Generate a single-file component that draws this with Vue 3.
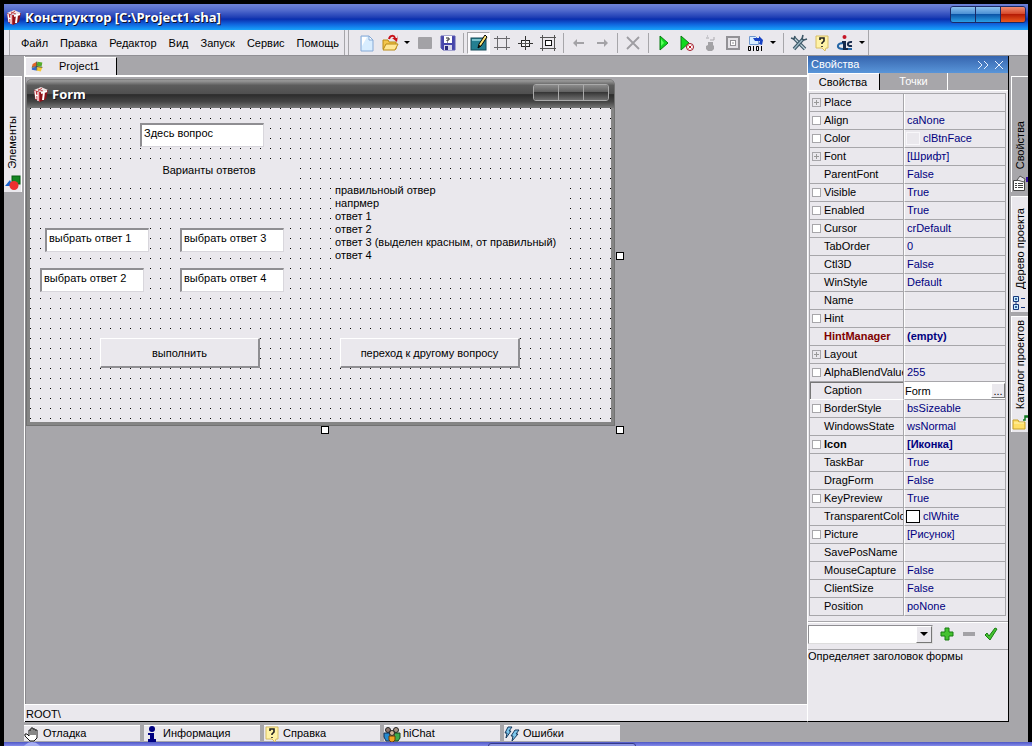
<script setup>
import { ref } from 'vue'

const menu = ['Файл', 'Правка', 'Редактор', 'Вид', 'Запуск', 'Сервис', 'Помощь']

const icons = {
  logo: '<path d="M1 4l6 2v10l-5-3z" fill="#c03038"/><path d="M7 6l8-2-2 9-6 3z" fill="#8f1219"/><path d="M1 4 8 1l7 3-8 2z" fill="#f1e4e4"/><path d="M5 3l5 2M9 2l-4 3" stroke="#c0484c" fill="none"/><path d="M2 5l1 8M5 6v9M3 9l2 1" stroke="#fff" stroke-width="1.300" fill="none"/><path d="M8 7l6-2M11 6l-1 8" stroke="#fff" stroke-width="2" fill="none"/>',
  file: '<path d="M2 1h8l4 4v11H2z" fill="#d8edff" stroke="#86a9d6"/><path d="M3 2h5L3 11z" fill="#fff"/><path d="M10 1v4h4z" fill="#fff" stroke="#86a9d6"/>',
  open: '<path d="M1 14V5h5l1 2h7v7z" fill="#f3c64d" stroke="#b98a15"/><path d="M1 15l3-6h12l-3 6z" fill="#ffe795" stroke="#b98a15"/><path d="M7 4c1-4 5-4 6-1" fill="none" stroke="#c81019" stroke-width="2"/><path d="M10 3h6v-3l-1 7z" fill="#c81019"/>',
  stop: '<rect x="1" y="2" width="14" height="12" rx="1" fill="#a3a2a6"/>',
  save: '<path d="M1 1h14v14H3l-2-2z" fill="#4645ab" stroke="#5a5ab0"/><rect x="4" y="1" width="8" height="7" fill="#fff"/><path d="M6 3h3v2H7v1M7 7h1" stroke="#222" fill="none"/><rect x="4" y="10" width="8" height="5" fill="#d7d7e9"/><rect x="5" y="11" width="3" height="4" fill="#29297d"/>',
  design: '<rect x="0" y="3" width="15" height="12" fill="#247f91" stroke="#154b59"/><path d="M1 5h13" stroke="#76bfca" stroke-width="2"/><path d="M7 13l1-4 6-9 2 2-6 9z" fill="#ffe777" stroke="#000"/><path d="M7 13l1-3 2 1z" fill="#000"/>',
  grid: '<path d="M3.500 1v14M12.500 1v14M0 3.500h16M0 12.500h16" stroke="#6a696d" fill="none"/>',
  target: '<path d="M8.500 1v14M1 8.500h15" stroke="#333" fill="none"/><rect x="4.500" y="5.500" width="8" height="6" fill="#f6f5f8" stroke="#222"/><path d="M8.500 5v7M4 8.500h9" stroke="#555" fill="none"/>',
  frame: '<path d="M2.500 0v16M14.500 0v16M0 2.500h16M0 13.500h16" stroke="#555" fill="none"/><rect x="5.500" y="5.500" width="6" height="5" fill="#fff" stroke="#111"/>',
  left: '<path d="M2 8l4-4v3h7v2H6v3z" fill="#a3a2a6"/>',
  right: '<path d="M14 8l-4-4v3H3v2h7v3z" fill="#a3a2a6"/>',
  cross: '<path d="M2 2l12 12M14 2L2 14" stroke="#9e9da2" stroke-width="1.800" fill="none"/>',
  play: '<path d="M4 1l8 7-8 7z" fill="#10d920" stroke="#087b10"/><path d="M5 4v7l3-3z" fill="#5cff5e"/>',
  playstop: '<path d="M2 1l8 7-8 7z" fill="#10d920" stroke="#087b10"/><circle cx="11" cy="12" r="3.500" fill="#fff" stroke="#9d1020"/><path d="M9.500 10.500l3 3m0-3l-3 3" stroke="#c01020"/>',
  bomb: '<path d="M6 7h5v3l1 1v3l-2 2H6l-2-2v-3l2-1z" fill="#a3a2a6"/><path d="M4 3h3M8 5h4V2M5 1h1" stroke="#aaa9ae" fill="none"/>',
  camera: '<rect x="2" y="2" width="12" height="12" fill="#e4e2e7" stroke="#929196" stroke-width="2"/><rect x="5.500" y="5.500" width="5" height="5" fill="#fff" stroke="#929196"/><path d="M8 7v2" stroke="#929196"/>',
  binary: '<path d="M1.500 1.500h6l3 3v5h-9z" fill="#d8edff" stroke="#6f98d0"/><path d="M5 3h6V1l4 4-1 5-3-1 1-3H7z" fill="#1742c4"/><path d="M.5 11.500h2v4h-2zM5.500 11v5M8.500 11.500h2v4h-2zM13.500 11v5" fill="none" stroke="#000"/>',
  tools: '<path d="M3 3l11 11" stroke="#3d5767" stroke-width="3.500" fill="none"/><path d="M3 3l11 11" stroke="#c2d4dc" stroke-width="1.300" fill="none"/><path d="M12 4L3 14" stroke="#3d5767" stroke-width="3.500" fill="none"/><path d="M12 4L3 14" stroke="#9cb8c4" stroke-width="1.300" fill="none"/><path d="M12 0l-1 4 2 1 3-1M0 3l3 1 1-3" stroke="#3d5767" stroke-width="1.600" fill="none"/>',
  help: '<path d="M2 1h12v12h-2l-1 3-3-3H2z" fill="#fff3a6" stroke="#d8bd62"/><path d="M6 5V3h4v3L8 8v1M8 11v1" stroke="#222" stroke-width="1.600" fill="none"/>',
  ic: '<path d="M7 8C-1 8-1 14 6 14h9" fill="none" stroke="#2566a6" stroke-width="2"/><path d="M5 6h4v7h2v2H6V8H5z" fill="#17294b"/><circle cx="7.500" cy="2" r="2" fill="#c51626"/><path d="M15 7c-5-1-6 5 0 4" stroke="#17294b" stroke-width="2" fill="none"/>',
  project: '<path d="M2 5l5-3v5L1 9z" fill="#e26427"/><path d="M8 2l6 1-1 5-6-1z" fill="#55ac2c"/><path d="M1 10l6-2-1 5-5-1z" fill="#3468d0"/><path d="M8 8l6 1-2 5-5-1z" fill="#f5c936"/><path d="M1 9l6-1 7 1M7 2v11" stroke="#343" fill="none"/>',
  shapes: '<path d="M0 11l5-6 3 6z" fill="#1463cf"/><rect x="7" y="1" width="8" height="8" fill="#158623" stroke="#075c13"/><circle cx="9" cy="10.500" r="4.500" fill="#ee3030"/>',
  props: '<path d="M1.500 5.500h11v10h-11z" fill="#fff" stroke="#444"/><path d="M3 8.500h2m1 0h5M3 10.500h2m1 0h5M3 12.500h2m1 0h5" stroke="#444"/><path d="M5 5l3-4 5 3-1 3z" fill="#e4e2e7" stroke="#555"/><path d="M14 2h2v5h-2z" fill="#34109b"/>',
  tree: '<path d="M1.500 1.500h5v5h-5zM1.500 9.500h5v5h-5z" fill="#bfeaff" stroke="#17377b"/><path d="M4 3v2M3 4h2M4 11v2M3 12h2M9 3.500h4M9 12.500h4M4 7v2" stroke="#17377b"/>',
  folder: '<path d="M1 14V5h5l1 2h6v7z" fill="#ffdf67" stroke="#c6a12c"/><path d="M2 8h10" stroke="#fff4b3"/><path d="M11 5h2V1h3M13 2h3" stroke="#107b22" fill="none" stroke-width="1.500"/>',
  hand: '<path d="M5 10V4h2V2h2v1h2v1h2v8l-3 3H6l-5-5V8h2z" fill="#fff" stroke="#111"/><path d="M7 4v5M9 3v6M11 4v5" stroke="#111"/>',
  info: '<circle cx="8" cy="3" r="3" fill="#000080"/><path d="M4 7h6v6h2v3H4v-3h2V9H4z" fill="#000080"/>',
  chat: '<circle cx="4" cy="4" r="2.500" fill="#8d7770" stroke="#222"/><circle cx="12" cy="4" r="2.500" fill="#a89484" stroke="#222"/><path d="M0 7h6v8H2l-2-4z" fill="#258bd0" stroke="#162f50"/><path d="M10 7h6v5l-2 3h-4z" fill="#3daa4d" stroke="#19431e"/><circle cx="8" cy="7" r="2.500" fill="#d0b49a" stroke="#222"/><path d="M5 10h6v4l-2 2H7l-2-2z" fill="#f2a11d" stroke="#693b08"/>',
  error: '<path d="M4 1h4L5 5h2l-5 7 1-5H1zM11 4h4l-3 4h2l-6 7 1-5H7z" fill="#7dc7ed" stroke="#16395d"/>',
  plus: '<path d="M6 2h4v4h4v4h-4v4H6v-4H2V6h4z" fill="#45c22f" stroke="#187d13"/>',
  minus: '<path d="M2 6h12v4H2z" fill="#a3a2a6"/>',
  check: '<path d="M2 9l2-2 2 3 6-8 2 1-7 11z" fill="#45c22f" stroke="#187d13"/>'
}

const tools = [
  ['file', 'Новый'], ['open', 'Открыть'], ['arrow', 'Недавние'], ['stop', 'Закрыть'], ['save', 'Сохранить'], ['sep'],
  ['design', 'Дизайнер'], ['grid', 'Сетка'], ['target', 'Центр'], ['frame', 'Рамка'], ['sep'],
  ['left', 'Назад'], ['right', 'Вперёд'], ['sep'], ['cross', 'Удалить'], ['sep'],
  ['play', 'Запустить'], ['playstop', 'Остановить'], ['bomb', 'Отладка'], ['camera', 'Снимок'], ['binary', 'Компиляция'], ['arrow', 'Варианты'], ['sep'],
  ['tools', 'Настройки'], ['help', 'Справка'], ['ic', 'О программе'], ['arrow', 'Ещё']
]

// name, value, marker (p = expandable, b = box), modifier
const props = [
  ['Place', '', 'p'], ['Align', 'caNone', 'b'], ['Color', 'clBtnFace', 'b', 'face'], ['Font', '[Шрифт]', 'p'],
  ['ParentFont', 'False'], ['Visible', 'True', 'b'], ['Enabled', 'True', 'b'], ['Cursor', 'crDefault', 'b'],
  ['TabOrder', '0'], ['Ctl3D', 'False'], ['WinStyle', 'Default'], ['Name', ''], ['Hint', '', 'b'],
  ['HintManager', '(empty)', '', 'red'], ['Layout', '', 'p'], ['AlphaBlendValue', '255', 'b'],
  ['Caption', 'Form', '', 'edit'], ['BorderStyle', 'bsSizeable', 'b'], ['WindowsState', 'wsNormal'],
  ['Icon', '[Иконка]', 'b', 'strong'], ['TaskBar', 'True'], ['DragForm', 'False'], ['KeyPreview', 'True', 'b'],
  ['TransparentColor', 'clWhite', '', 'white'], ['Picture', '[Рисунок]', 'b'], ['SavePosName', ''],
  ['MouseCapture', 'False'], ['ClientSize', 'False'], ['Position', 'poNone']
]

const bottomTabs = [['hand', 'Отладка'], ['info', 'Информация'], ['help', 'Справка'], ['chat', 'hiChat'], ['error', 'Ошибки']]
const sideTabs = [['props', 'Свойства'], ['tree', 'Дерево проекта'], ['folder', 'Каталог проектов']]

const question = ref('Здесь вопрос')
const answers = ref(['выбрать ответ 1', 'выбрать ответ 3', 'выбрать ответ 2', 'выбрать ответ 4'])
const caption = ref('Form')
</script>

<template>
  <div class="screen">
    <header class="titlebar">
      <svg class="ico" viewBox="0 0 16 16" v-html="icons.logo" />
      <h1>Конструктор [C:\Project1.sha]</h1>
      <div class="winbtns">
        <button aria-label="Свернуть"></button><button aria-label="Развернуть"></button><button class="close" aria-label="Закрыть"></button>
      </div>
    </header>

    <div class="bars">
      <nav class="menu">
        <button v-for="m in menu" :key="m">{{ m }}</button>
      </nav>
      <div class="tools">
        <template v-for="(t, i) in tools" :key="i">
          <span v-if="t[0] === 'sep'" class="sep"></span>
          <button v-else-if="t[0] === 'arrow'" class="drop" :aria-label="t[1]"><i></i></button>
          <button v-else :class="{ pressed: t[0] === 'design' }" :aria-label="t[1]">
            <svg class="ico" viewBox="0 0 16 16" v-html="icons[t[0]]" />
          </button>
        </template>
      </div>
    </div>

    <div class="body">
      <aside class="left">
        <button class="vtab"><svg class="ico" viewBox="0 0 16 16" v-html="icons.shapes" /><span>Элементы</span></button>
      </aside>

      <main class="center">
        <div class="doctabs">
          <button><svg viewBox="0 0 16 16" v-html="icons.project" /><span>Project1</span></button>
        </div>
        <div class="canvas">
          <section class="form">
            <div class="formtitle">
              <svg class="ico" viewBox="0 0 16 16" v-html="icons.logo" />
              <h2>Form</h2>
              <div class="winbtns grey">
                <button aria-label="Свернуть форму"></button><button aria-label="Развернуть форму"></button><button aria-label="Закрыть форму"></button>
              </div>
            </div>
            <div class="client">
              <input v-model="question" class="node q" aria-label="Вопрос">
              <div class="node variants">Варианты ответов</div>
              <div class="node result">правильноый отвер<br>напрмер<br>ответ 1<br>ответ 2<br>ответ 3 (выделен красным, от правильный)<br>ответ 4</div>
              <input v-for="(a, i) in answers" :key="i" v-model="answers[i]" :class="['node', 'ans', 'a' + i]" :aria-label="'Ответ ' + (i + 1)">
              <button class="node run">выполнить</button>
              <button class="node next">переход к другому вопросу</button>
            </div>
            <i class="handle e"></i><i class="handle s"></i><i class="handle se"></i>
          </section>
        </div>
        <div class="path">ROOT\</div>
      </main>

      <aside class="inspector">
        <div class="ihead"><span>Свойства</span>
          <svg viewBox="0 0 28 12"><path d="M1 2l4 4-4 4M7 2l4 4-4 4M18 2l8 8M26 2l-8 8" fill="none" stroke="#e8f0ff" /></svg>
        </div>
        <div class="itabs"><button class="on">Свойства</button><button>Точки</button></div>
        <table>
          <tbody>
            <tr v-for="p in props" :key="p[0]" :class="p[3]">
              <th scope="row"><div><i :class="['mark', p[2]]"></i><span>{{ p[0] }}</span></div></th>
              <td>
                <div v-if="p[3] === 'edit'" class="field"><input v-model="caption" aria-label="Caption"><button>...</button></div>
                <div v-else><i v-if="p[3] === 'face' || p[3] === 'white'" class="swatch"></i>{{ p[1] }}</div>
              </td>
            </tr>
          </tbody>
        </table>
        <div class="pick">
          <div class="combo"><select aria-label="Набор свойств"><option></option></select><b><i></i></b></div>
          <button aria-label="Добавить"><svg class="ico" viewBox="0 0 16 16" v-html="icons.plus" /></button>
          <button aria-label="Убрать"><svg class="ico" viewBox="0 0 16 16" v-html="icons.minus" /></button>
          <button aria-label="Применить"><svg class="ico" viewBox="0 0 16 16" v-html="icons.check" /></button>
        </div>
        <p>Определяет заголовок формы</p>
      </aside>

      <aside class="right">
        <button v-for="(s, i) in sideTabs" :key="s[1]" :class="['vtab', { on: i === 0 }]">
          <svg class="ico" viewBox="0 0 16 16" v-html="icons[s[0]]" /><span>{{ s[1] }}</span>
        </button>
      </aside>
    </div>

    <footer class="bottom">
      <button v-for="b in bottomTabs" :key="b[1]"><svg class="ico" viewBox="0 0 16 16" v-html="icons[b[0]]" /><span>{{ b[1] }}</span></button>
    </footer>
    <div class="taskbar"><i class="start"></i><i class="task"></i></div>
  </div>
</template>

<style>
body { background: #000; }
</style>

<style scoped>
* { box-sizing: border-box; }
.screen {
  display: flex; flex-direction: column; min-height: 100vh; padding: 4px 4px 0;
  background: #000; color: #000; font: 11px/13px "Liberation Sans", Arial, sans-serif;
}
button, input, select { font: inherit; color: inherit; margin: 0; padding: 0; border: 0; border-radius: 0; background: none; }
button { white-space: nowrap; }
h1, h2, p { margin: 0; font-size: inherit; }
.ico { width: 16px; height: 16px; flex: none; display: block; overflow: visible; }

.titlebar {
  display: flex; align-items: center; height: 26px; padding: 0 2px;
  background: linear-gradient(#6f83d8 0, #5069cc 25%, #1d3db4 52%, #0a2fae 58%, #1065de 78%, #18a3fb 100%);
}
h1, h2 { flex: 1; padding-left: 3px; color: #fff; font: bold 13px/16px "Open Sans", "Noto Sans", sans-serif; text-shadow: 1px 1px 0 #112; }
.winbtns { display: flex; height: 17px; align-self: flex-start; margin-top: 2px; border: 1px solid #1b2a66; border-radius: 3px; overflow: hidden; }
.winbtns button { width: 25px; border-right: 1px solid #1b2a66; background: linear-gradient(#8dc1ee, #4d91d4 45%, #0c56a8 50%, #2ba0e6); }
.winbtns .close { width: 24px; border: 0; background: linear-gradient(#f08b70, #d64a2c 45%, #b61c04 50%, #ea5a20); }
.winbtns.grey { border-color: #aaa; margin-top: 5px; }
.winbtns.grey button { border-color: #aaa; background: linear-gradient(#8b8b8b, #626262 45%, #373737 50%, #707070); }
.winbtns.grey button:last-child { width: 24px; border-right: 0; }

.bars { display: flex; height: 26px; background: #eae8ed; border-bottom: 1px solid #908f94; }
.menu { flex: none; display: flex; align-items: center; gap: 12px; width: 336px; padding: 2px 0 0 11px; margin-left: 5px; border-left: 1px solid #a7a6aa; border-right: 1px solid #a7a6aa; }
.tools { display: flex; align-items: center; margin-left: 3px; padding-left: 6px; border-left: 1px solid #a7a6aa; border-right: 1px solid #a7a6aa; }
.tools button { display: grid; place-items: center; width: 23px; height: 22px; }
.tools .pressed { background: #faf9fc; border: 1px solid; border-color: #a7a6aa #fff #fff #a7a6aa; }
.tools .drop { width: 12px; }
.drop i, .combo i { width: 0; border: 3px solid transparent; border-top-color: #000; border-bottom: 0; }
.sep { width: 8px; height: 20px; background: linear-gradient(90deg, transparent 4px, #a7a6aa 4px, #a7a6aa 5px, transparent 5px); }

.body { flex: 1; display: flex; background: #a7a6aa; }
.left, .right { flex: none; width: 20px; padding-top: 20px; }
.right { width: 19px; padding-left: 2px; display: flex; flex-direction: column; gap: 4px; }
.vtab {
  display: flex; flex-direction: column-reverse; align-items: center; gap: 6px; height: 116px; width: 18px; padding-bottom: 1px;
  background: #eae8ed; border-top: 1px solid #fff; border-right: 1px solid #fff;
}
.right .vtab { width: 17px; border-left: 1px solid #fff; border-right: 0; }
.vtab.on { background: #a7a6aa; }
.vtab span { writing-mode: vertical-rl; transform: rotate(180deg); }

.center { flex: 1; min-width: 0; display: flex; flex-direction: column; border-left: 1px solid #fff; }
.doctabs { height: 21px; border-bottom: 2px solid #fff; }
.doctabs button { display: flex; align-items: center; gap: 15px; width: 92px; height: 18px; margin-top: 1px; padding-left: 5px; background: #eae8ed; border-left: 1px solid #fff; border-top: 1px solid #fff; border-right: 1px solid #000; }
.doctabs svg { width: 13px; height: 13px; }
.canvas { flex: 1; padding-top: 2px; border-left: 1px solid #8a898d; }
.form { position: relative; width: 589px; padding: 0 3px 3px; border-radius: 6px 6px 0 0; background: #858585; border: 1px solid #727272; border-top: 0; }
.formtitle { display: flex; height: 29px; margin: 0 -3px; padding: 0 5px 0 6px; border-radius: 6px 6px 0 0; background: linear-gradient(#777 0, #999 6%, #5c5c5c 22%, #505050 50%, #2c2c2c 54%, #444 78%, #777 100%); }
.formtitle .ico { margin-top: 7px; }
.formtitle h2 { line-height: 31px; }
.client {
  position: relative; height: 314px;
  background: linear-gradient(90deg, transparent 1px, #eae8ed 1px) 0 0 / 10px 10px, linear-gradient(#000 1px, #eae8ed 1px) 0 0 / 10px 10px;
}
.node { position: absolute; }
.client input { height: 24px; padding: 0 0 5px 2px; background: #fff; border: 1px solid; border-width: 2px 1px 1px 2px; border-color: #8f8e92 #d8d6dc #d8d6dc #8f8e92; }
.client .q { left: 110px; top: 15px; width: 124px; }
.ans { width: 104px; }
.a0 { left: 15px; top: 120px; }
.a1 { left: 150px; top: 120px; }
.a2 { left: 10px; top: 160px; }
.a3 { left: 150px; top: 160px; }
.variants { left: 89px; top: 56px; width: 180px; padding-bottom: 3px; text-align: center; background: #eae8ed; }
.result { left: 305px; top: 75px; width: 233px; height: 89px; padding-top: 1px; background: #eae8ed; }
.client button { top: 230px; height: 30px; padding-top: 2px; background: #eae8ed; border: 1px solid; border-width: 1px 2px 2px 1px; border-color: #fff #8f8e92 #8f8e92 #fff; }
.run { left: 70px; width: 160px; }
.next { left: 310px; width: 180px; }
.handle { position: absolute; width: 8px; height: 8px; background: #fff; border: 1px solid #000; }
.handle.e { right: -10px; top: 173px; }
.handle.s { left: 294px; bottom: -9px; }
.handle.se { right: -10px; bottom: -9px; }
.path { height: 18px; padding: 2px 1px; background: #eae8ed; border-top: 1px solid #fff; border-bottom: 1px solid #000; line-height: 15px; }

.inspector { flex: none; width: 202px; display: flex; flex-direction: column; background: #eae8ed; border-left: 1px solid #fff; border-right: 1px solid #000; border-bottom: 1px solid #000; }
.ihead { display: flex; justify-content: space-between; align-items: center; height: 17px; padding: 0 3px; color: #fff; background: linear-gradient(#3665ae, #5995d9); }
.ihead svg { width: 28px; height: 12px; }
.itabs { display: flex; height: 18px; background: #a7a6aa; border-bottom: 1px solid #fff; }
.itabs button { width: 68px; color: #fff; border-right: 1px solid #fff; }
.itabs .on { width: 72px; padding-right: 2px; color: #000; background: #eae8ed; border: 1px solid #fff; border-right: 1px solid #000; border-bottom: 0; }
table { table-layout: fixed; width: 197px; margin: 2px 0 5px 1px; border-collapse: separate; border-spacing: 0; border: 1px solid #a7a6aa; border-bottom: 0; }
th, td { height: 18px; padding: 0; font-weight: normal; text-align: left; border-bottom: 1px solid #a7a6aa; overflow: hidden; }
th { width: 94px; border-right: 1px solid #a7a6aa; }
td { border-left: 1px solid #fff; color: #000080; }
th > div { display: flex; align-items: center; gap: 3px; height: 17px; padding-left: 2px; overflow: hidden; }
td > div { display: flex; align-items: center; height: 17px; padding-left: 2px; }
.mark { flex: none; width: 9px; height: 9px; }
.mark.b, .mark.p { background: #fff; border: 1px solid #a7a6aa; }
.mark.p { background: linear-gradient(#999, #999) center / 5px 1px no-repeat, linear-gradient(#999, #999) center / 1px 5px no-repeat, #eae8ed; }
.swatch { width: 14px; height: 13px; margin: 0 3px 0 -1px; border: 1px solid #f8f7fa; }
.white .swatch { background: #fff; border-color: #000; }
.strong th, .strong td, .red th, .red td { font-weight: bold; }
.red th { color: #800000; }
.edit th { box-shadow: inset 1px 1px #777; border-bottom-color: #fff; }
.edit td { background: #fff; color: #000; }
td > .field { padding: 0; }
.field input { flex: 1; min-width: 0; height: 15px; }
.field button { width: 14px; height: 15px; background: #eae8ed; border: 1px solid; border-color: #fff #777 #777 #fff; line-height: 10px; }
.pick { display: flex; align-items: center; gap: 6px; height: 28px; padding-bottom: 3px; border-top: 1px solid #a7a6aa; box-shadow: inset 0 1px #fff; }
.combo { position: relative; width: 125px; height: 19px; }
.combo select { appearance: none; width: 100%; height: 100%; background: #fff; border: 1px solid; border-color: #8f8e92 #ddd #ddd #8f8e92; }
.combo b { position: absolute; right: 1px; top: 1px; width: 16px; height: 17px; display: grid; place-items: center; background: #eae8ed; border: 1px solid; border-color: #fff #777 #777 #fff; pointer-events: none; }
.combo i { border-width: 4px; border-bottom: 0; }
.inspector p { flex: 1; border-top: 1px solid #a7a6aa; }

.bottom { display: flex; gap: 4px; height: 20px; padding: 3px 0 0 20px; background: #a7a6aa; }
.bottom button { display: flex; align-items: center; gap: 3px; width: 116px; height: 16px; background: #eae8ed; border-top: 1px solid #fff; }
.taskbar { position: relative; height: 4px; margin: 0 -4px 0 0; background: linear-gradient(#4f58c5, #858bea); overflow: hidden; }
.start { position: absolute; left: 18px; top: 0; width: 20px; height: 20px; border-radius: 50%; background: #a7aef3; }
.task { position: absolute; left: 484px; top: 1px; width: 148px; height: 10px; border-radius: 3px; border: 1px solid #343a8a; background: #8f97e4; }
</style>
